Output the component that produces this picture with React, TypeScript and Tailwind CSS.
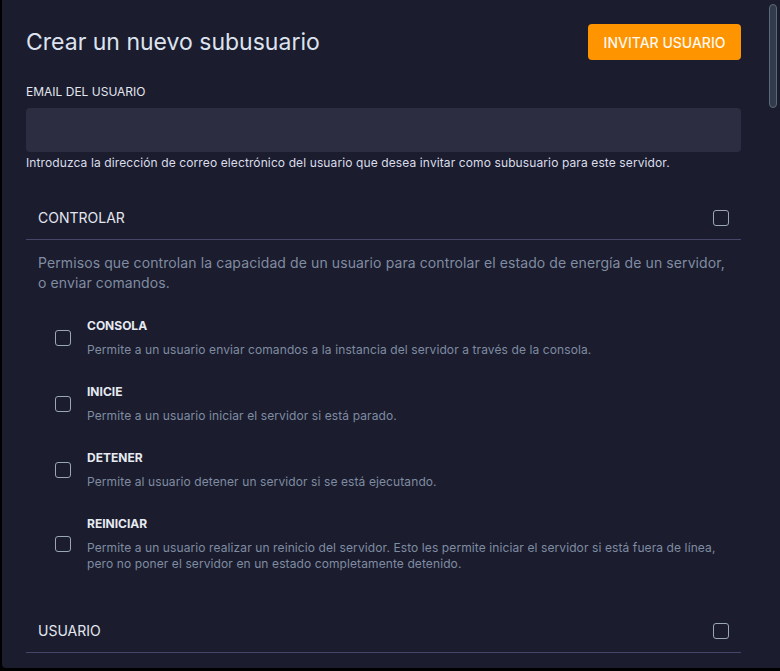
import React from "react";

const Box = () => (
  <div className="w-4 h-4 shrink-0 rounded-[3px] border-[1.5px] border-[#9ba6b6]" />
);

const items = [
  { t: "CONSOLA", d: "Permite a un usuario enviar comandos a la instancia del servidor a través de la consola." },
  { t: "INICIE", d: "Permite a un usuario iniciar el servidor si está parado." },
  { t: "DETENER", d: "Permite al usuario detener un servidor si se está ejecutando." },
  {
    t: "REINICIAR",
    d: "Permite a un usuario realizar un reinicio del servidor. Esto les permite iniciar el servidor si está fuera de línea, pero no poner el servidor en un estado completamente detenido.",
  },
];

export default function App() {
  return (
    <div className="w-[780px] h-[671px] bg-black pl-[2px] overflow-hidden" style={{ fontFamily: "Inter, 'Liberation Sans', sans-serif" }}>
      <div className="relative h-[668px] bg-[#1b1c2e] rounded-bl-[4px] overflow-hidden pl-6 pr-[39px]">
        <div className="absolute right-[3px] top-[4px] w-[8px] h-[104px] rounded-full border border-[#5d6878] bg-[#323b4b]" />
        <div className="flex items-center justify-between pt-6">
          <h1 className="text-[23px] leading-8 text-[#dde3ee] font-normal">Crear un nuevo subusuario</h1>
          <button className="h-9 w-[153px] rounded-[4px] bg-[#fd9400] text-[#fff8ee] text-[14px] font-medium">
            INVITAR USUARIO
          </button>
        </div>
        <div className="mt-6 text-[12px] leading-4 text-[#e2e6ef]">EMAIL DEL USUARIO</div>
        <div className="mt-2 h-11 rounded-[4px] bg-[#2c2d41]" />
        <div className="mt-[3px] text-[12px] leading-4 tracking-[0.11px] text-[#dadeea]">
          Introduzca la dirección de correo electrónico del usuario que desea invitar como subusuario para este servidor.
        </div>

        <div className="mt-[25px] h-11 px-3 flex items-center justify-between border-b border-[#45466a]">
          <span className="text-[14px] text-[#e3e7f0]">CONTROLAR</span>
          <Box />
        </div>
        <div className="pt-[13px] px-3 text-[14px] leading-5 tracking-[0.1px] text-[#808ca1]">
          Permisos que controlan la capacidad de un usuario para controlar el estado de energía de un servidor, o enviar comandos.
        </div>
        <div className="mt-6 flex flex-col gap-[25px] pl-[29px]">
          {items.map((it) => (
            <div key={it.t} className="flex items-center gap-4">
              <Box />
              <div className="flex flex-col gap-2 pt-px">
                <div className="text-[12px] leading-4 font-bold text-[#e6eaf2]">{it.t}</div>
                <div className="text-[12px] leading-[16px] tracking-[0.1px] text-[#7f8ca1]">{it.d}</div>
              </div>
            </div>
          ))}
        </div>

        <div className="mt-[37px] h-11 px-3 flex items-center justify-between border-b border-[#45466a]">
          <span className="text-[14px] text-[#e3e7f0]">USUARIO</span>
          <Box />
        </div>
      </div>
    </div>
  );
}
